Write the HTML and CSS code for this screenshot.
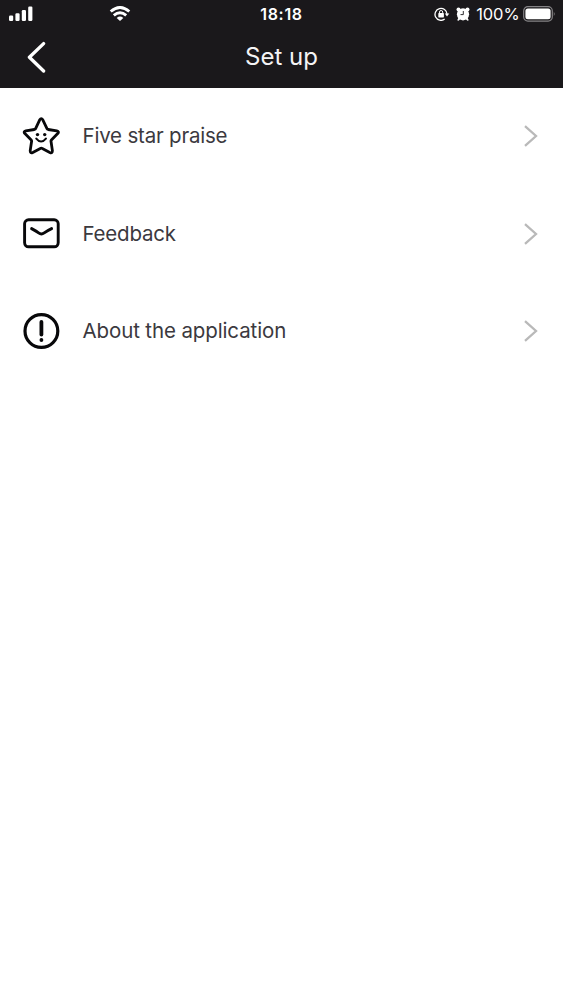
FILE: index.html
```html
<!DOCTYPE html>
<html lang="en">
<head>
<meta charset="utf-8">
<title>Set up</title>
<link rel="stylesheet" href="styles.css">
</head>
<body>
<header class="header">
  <div class="status">
    <div class="status-left">
      <svg class="signal" width="24" height="16" viewBox="0 0 24 16" fill="#fff"><rect x="0" y="9.5" width="4.2" height="5.5" rx="1.2"/><rect x="6.4" y="7.3" width="4.2" height="7.7" rx="1.2"/><rect x="12.8" y="4" width="4.2" height="11" rx="1.2"/><rect x="19.2" y="0.5" width="4.2" height="14.5" rx="1.2"/></svg>
      <svg class="wifi" width="22" height="16" viewBox="0 0 22 16" fill="none" stroke="#fff" stroke-width="2.9"><path d="M1.7 5.5Q11-2.5 20.3 5.5"/><path d="M4.8 9.3Q11 4 17.2 9.3"/><path d="M11 15L7.7 11.9Q11 9.3 14.3 11.9Z" fill="#fff" stroke="none"/></svg>
    </div>
    <div class="time">18:18</div>
    <div class="status-right">
      <svg class="lock" width="16" height="14" viewBox="0 0 16 14" fill="none" stroke="#fff" stroke-width="1.3"><path d="M10.7 12.1A6 6 0 1 1 13 7"/><path d="M10.8 6.4h4.5L13 9.6Z" fill="#fff" stroke="none"/><rect x="4.3" y="6.1" width="5.6" height="4.3" rx=".6" fill="#fff" stroke="none"/><path d="M5.5 6.5V5.1a1.6 1.6 0 0 1 3.2 0v1.4" stroke-width="1"/></svg>
      <svg class="alarm" width="14" height="14" viewBox="0 0 14 14"><g fill="#fff"><circle cx="7" cy="7.3" r="6.1"/><circle cx="2.5" cy="2.4" r="2"/><circle cx="11.5" cy="2.4" r="2"/><path d="M2.8 10L1.2 13.2l1.4.6L5 11.5zM11.2 10l1.6 3.2-1.4.6L9 11.5z"/></g><path d="M7.3 4v3.6H4.5" fill="none" stroke="#1a181b" stroke-width=".9"/></svg>
      <span class="percent">100%</span>
      <svg class="battery" width="33" height="16" viewBox="0 0 33 16"><rect x=".7" y=".7" width="28.6" height="14.4" rx="4.2" fill="none" stroke="#858386" stroke-width="1.2"/><rect x="2.4" y="2.5" width="25.2" height="10.8" rx="2.5" fill="#fff"/><path d="M30.8 5.5q1.8 2.4 0 4.8z" fill="#858386"/></svg>
    </div>
  </div>
  <div class="nav">
    <svg class="back" width="20" height="32" viewBox="0 0 20 32" fill="none" stroke="#fff" stroke-width="3.3" stroke-linecap="round" stroke-linejoin="round"><path d="M16.6 2.6 2.4 16.3 16.6 30"/></svg>
    <h1 class="title">Set up</h1>
  </div>
</header>
<main class="list">
  <div class="row">
    <svg class="icon" width="38" height="38" viewBox="-0.3 0 38 38" fill="none" stroke="#08080a" stroke-width="2.8" stroke-linecap="round" stroke-linejoin="round"><path d="M17.4 2.8Q19 .5 20.5 2.8L24.7 11.6Q25 12.3 25.9 12.5L34.5 13.9Q37.2 14.5 35.4 16.5L29.1 23Q28.6 23.5 28.7 24.3L30.1 33.6Q30.2 36.7 27.5 35.4L20 31.4Q19 30.9 18 31.4L10.5 35.4Q7.8 36.7 7.9 33.6L9.3 24.3Q9.4 23.5 8.9 23L2.6 16.5Q.8 14.5 3.5 13.9L12.1 12.5Q13 12.3 13.3 11.6Z"/><path d="M14 21.6Q18.8 27.4 23.6 21.6" stroke-width="2.1"/><g fill="#08080a" stroke="none"><circle cx="15.2" cy="17.6" r="1.7"/><circle cx="22.4" cy="17.6" r="1.7"/></g></svg>
    <span class="label label-star">Five star praise</span>
    <svg class="chevron" width="16" height="24" viewBox="0 0 16 24"><path d="M2 2.2 13 12 2 21.8"/></svg>
  </div>
  <div class="row">
    <svg class="icon" width="38" height="38" viewBox="-0.4 0.4 38 38" fill="none" stroke="#08080a" stroke-width="2.9" stroke-linecap="round" stroke-linejoin="round"><rect x="2.2" y="5.2" width="33.6" height="27" rx="4"/><path d="M9.2 14Q13.5 16.3 16.2 18.3Q19 20.3 21.8 18.3Q25 16 29.2 14"/></svg>
    <span class="label label-feedback">Feedback</span>
    <svg class="chevron" width="16" height="24" viewBox="0 0 16 24"><path d="M2 2.2 13 12 2 21.8"/></svg>
  </div>
  <div class="row">
    <svg class="icon" width="38" height="38" viewBox="-0.4 0 38 38" fill="none" stroke="#08080a" stroke-width="3.2" stroke-linecap="round"><circle cx="19" cy="19" r="16.4"/><path d="M19 10v12.5" stroke-width="3.8"/><circle cx="19" cy="28" r="1.9" fill="#08080a" stroke="none"/></svg>
    <span class="label label-about">About the application</span>
    <svg class="chevron" width="16" height="24" viewBox="0 0 16 24"><path d="M2 2.2 13 12 2 21.8"/></svg>
  </div>
</main>
</body>
</html>
```
FILE: styles.css
```css
* { box-sizing: border-box; }
body { margin: 0; min-height: 1000px; background: #fff; font-family: Inter, "Liberation Sans", sans-serif; }
svg { display: block; flex: none; }
.header { height: 88px; background: #1a181b; color: #fff; }
.status { height: 28px; display: grid; grid-template-columns: 1fr auto 1fr; align-items: center; }
.status-left { display: flex; align-items: center; padding-left: 9px; }
.wifi { margin-left: 76px; }
.time { font-size: 16px; line-height: 28px; font-weight: 600; letter-spacing: 0.7px; }
.status-right { display: flex; align-items: center; justify-content: flex-end; padding-right: 7px; }
.alarm { margin: 0 6px 0 7px; }
.percent { font-size: 16.5px; line-height: 28px; letter-spacing: -0.1px; margin-right: 3.5px; }
.lock { margin-right: -0.5px; }
.nav { height: 60px; display: grid; grid-template-columns: 1fr auto 1fr; align-items: start; }
.back { margin-left: 27px; margin-top: 13px; }
.title { margin: 14px 0 0; grid-column: 2; font-size: 24px; line-height: 30px; font-weight: 400; color: #f4f3f5; }
.row { height: 97.5px; display: flex; align-items: center; padding: 0 24px 1.5px 22px; }
.label { margin-left: 22.5px; flex: 1; font-size: 20.5px; line-height: 28px; color: #3b393e; white-space: nowrap; letter-spacing: -0.12px; }
.label-star { letter-spacing: -0.2px; }
.label-feedback { letter-spacing: -0.2px; }
.chevron { fill: none; stroke: #b9b9b9; stroke-width: 2.3; }
```
